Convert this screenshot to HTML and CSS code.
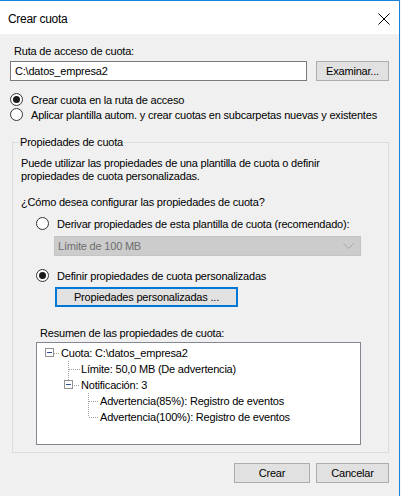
FILE: index.html
```html
<!DOCTYPE html>
<html lang="es">
<head>
<meta charset="utf-8">
<title>Crear cuota</title>
<link rel="stylesheet" href="styles.css">
</head>
<body>
<div class="window">
  <div class="titlebar">
    <span class="title">Crear cuota</span>
    <svg class="close" width="12" height="12" viewBox="0 0 12 12"><path d="M0.5 0.5L11.5 11.5M11.5 0.5L0.5 11.5" stroke="#000" stroke-width="1" fill="none"/></svg>
  </div>
  <div class="content">
    <div class="label path-label">Ruta de acceso de cuota:</div>
    <div class="path-row">
      <div class="textbox">C:\datos_empresa2</div>
      <div class="btn">Examinar...</div>
    </div>
    <div class="options">
      <div class="radio checked"><span class="dot"></span><span>Crear cuota en la ruta de acceso</span></div>
      <div class="radio"><span class="dot"></span><span>Aplicar plantilla autom. y crear cuotas en subcarpetas nuevas y existentes</span></div>
    </div>
    <fieldset class="group">
      <legend>Propiedades de cuota</legend>
      <p class="para">Puede utilizar las propiedades de una plantilla de cuota o definir propiedades de cuota personalizadas.</p>
      <div class="label question">¿Cómo desea configurar las propiedades de cuota?</div>
      <div class="radio sub derive"><span class="dot"></span><span>Derivar propiedades de esta plantilla de cuota (recomendado):</span></div>
      <div class="combo">
        <span>Límite de 100 MB</span>
        <svg width="11" height="6" viewBox="0 0 11 6"><path d="M0.5 0.5L5.5 5.5L10.5 0.5" stroke="#a6a6a6" fill="none"/></svg>
      </div>
      <div class="radio sub checked custom"><span class="dot"></span><span>Definir propiedades de cuota personalizadas</span></div>
      <div class="btn focused">Propiedades personalizadas ...</div>
      <div class="label summary">Resumen de las propiedades de cuota:</div>
      <div class="tree">
        <div class="node">
          <svg class="gutter" width="24" height="16" viewBox="0 0 24 16">
            <rect x="8.5" y="3.5" width="8" height="8" fill="#fff" stroke="#919191"/>
            <path d="M10 7.5H15" stroke="#2b4f8f"/>
            <path d="M17 8.5H23" stroke="#a0a0a0" stroke-dasharray="1 1"/>
          </svg>
          <span>Cuota: C:\datos_empresa2</span>
        </div>
        <div class="node">
          <svg class="gutter" width="44" height="16" viewBox="0 0 44 16">
            <path d="M31.5 0V16" stroke="#a0a0a0" stroke-dasharray="1 1"/>
            <path d="M32 8.5H43" stroke="#a0a0a0" stroke-dasharray="1 1"/>
          </svg>
          <span>Límite: 50,0 MB (De advertencia)</span>
        </div>
        <div class="node">
          <svg class="gutter" width="44" height="16" viewBox="0 0 44 16">
            <path d="M31.5 0V3" stroke="#a0a0a0" stroke-dasharray="1 1"/>
            <rect x="27.5" y="3.5" width="8" height="8" fill="#fff" stroke="#919191"/>
            <path d="M29 7.5H34" stroke="#2b4f8f"/>
            <path d="M37 8.5H43" stroke="#a0a0a0" stroke-dasharray="1 1"/>
          </svg>
          <span>Notificación: 3</span>
        </div>
        <div class="node">
          <svg class="gutter" width="63" height="16" viewBox="0 0 63 16">
            <path d="M51.5 0V16" stroke="#a0a0a0" stroke-dasharray="1 1"/>
            <path d="M52 8.5H62" stroke="#a0a0a0" stroke-dasharray="1 1"/>
          </svg>
          <span>Advertencia(85%): Registro de eventos</span>
        </div>
        <div class="node">
          <svg class="gutter" width="63" height="16" viewBox="0 0 63 16">
            <path d="M51.5 0V8" stroke="#a0a0a0" stroke-dasharray="1 1"/>
            <path d="M52 8.5H62" stroke="#a0a0a0" stroke-dasharray="1 1"/>
          </svg>
          <span>Advertencia(100%): Registro de eventos</span>
        </div>
      </div>
    </fieldset>
    <div class="footer">
      <div class="btn wide">Crear</div>
      <div class="btn">Cancelar</div>
    </div>
  </div>
</div>
</body>
</html>
```

FILE: styles.css
```css
* { box-sizing: border-box; }
html, body { margin: 0; padding: 0; }
body {
  width: 401px;
  height: 496px;
  overflow: hidden;
  background: #f7f7f7;
  font-family: "Liberation Sans", Arial, sans-serif;
  font-size: 11px;
  letter-spacing: -0.2px;
  color: #000;
}
.window {
  width: 400px;
  height: 496px;
  border-top: 1px solid #1883d7;
  border-right: 1px solid #1883d7;
  background: #f0f0f0;
  display: flex;
  flex-direction: column;
}
.titlebar {
  height: 33px;
  flex: none;
  background: #fff;
  display: flex;
  align-items: center;
  justify-content: space-between;
  padding: 2px 9px 0 8px;
}
.title { font-size: 12px; letter-spacing: -0.3px; }
.close { display: block; width: 12px; height: 12px; }
.content {
  flex: 1;
  padding: 11px 10px 0 10px;
  display: flex;
  flex-direction: column;
}
.label { line-height: 13px; }
.path-label { padding-left: 4px; }
.path-row {
  display: flex;
  gap: 9px;
  margin-top: 3px;
}
.textbox {
  width: 297px;
  height: 20px;
  background: #fff;
  border: 1px solid #7a7a7a;
  padding-left: 4px;
  line-height: 18px;
}
.btn {
  width: 73px;
  height: 20px;
  flex: none;
  background: #e1e1e1;
  border: 1px solid #adadad;
  display: flex;
  align-items: center;
  justify-content: center;
}
.btn.wide { width: 76px; }
.options { margin-top: 11px; }
.radio {
  display: flex;
  align-items: center;
  height: 15px;
  gap: 8px;
  white-space: nowrap;
}
.radio .dot {
  width: 13px;
  height: 13px;
  flex: none;
  border: 1px solid #333;
  border-radius: 50%;
  background: #fff;
  display: flex;
  align-items: center;
  justify-content: center;
}
.radio.checked .dot::after {
  content: "";
  width: 7px;
  height: 7px;
  border-radius: 50%;
  background: #1a1a1a;
}
.group {
  margin: 14px 0 0 2px;
  width: 377px;
  min-width: 0;
  border: 1px solid #dcdcdc;
  padding: 0 8px 7px 8px;
  display: flex;
  flex-direction: column;
}
.group legend {
  padding: 0;
  margin-left: -1px;
  line-height: 13px;
}
.para {
  margin: 8px 0 0 0;
  line-height: 13px;
  width: 330px;
}
.question { margin-top: 13px; }
.radio.sub { margin-left: 15px; }
.derive { margin-top: 7px; }
.combo {
  margin: 5px 0 0 33px;
  width: 307px;
  height: 20px;
  background: #cccccc;
  border: 1px solid #c4c4c4;
  color: #6d6d6d;
  display: flex;
  align-items: center;
  justify-content: space-between;
  padding: 0 6px 0 3px;
}
.combo svg { display: block; }
.custom { margin-top: 12px; }
.btn.focused {
  width: 183px;
  margin: 4px 0 0 34px;
  border: 2px solid #0078d7;
}
.summary { margin: 20px 0 0 19px; }
.tree {
  margin: 2px 0 0 15px;
  width: 325px;
  height: 103px;
  background: #fff;
  border: 1px solid #828790;
  padding-top: 2px;
}
.node {
  display: flex;
  align-items: center;
  height: 16px;
}
.gutter { display: block; flex: none; }
.footer {
  display: flex;
  justify-content: flex-end;
  gap: 6px;
  margin-top: 10px;
}
```
